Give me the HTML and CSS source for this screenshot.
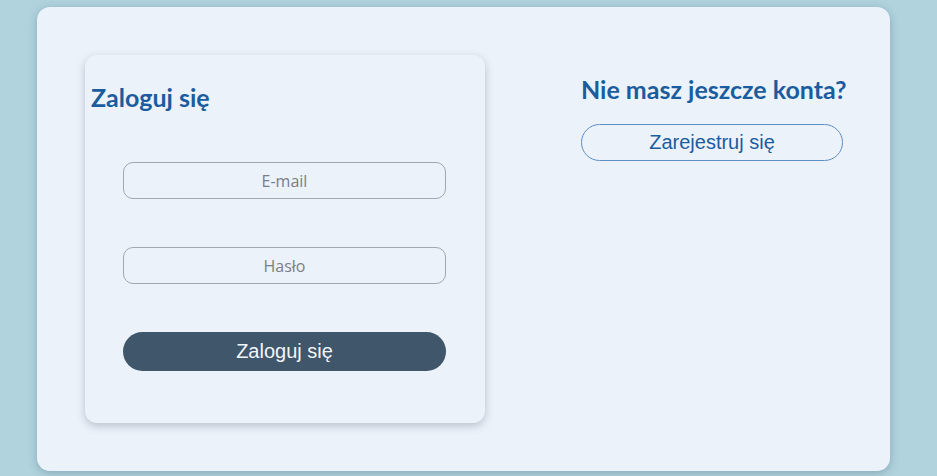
FILE: index.html
```html
<!DOCTYPE html>
<html lang="pl">
<head>
<meta charset="utf-8">
<title>Logowanie</title>
<link rel="stylesheet" href="styles.css">
</head>
<body>
<main class="panel">
  <section class="login-card">
    <h1 class="title">Zaloguj się</h1>
    <form class="form">
      <input class="field" type="email" placeholder="E-mail">
      <input class="field" type="password" placeholder="Hasło">
      <button class="btn-primary" type="button">Zaloguj się</button>
    </form>
  </section>
  <section class="register">
    <h2 class="title title-right">Nie masz jeszcze konta?</h2>
    <button class="btn-outline" type="button">Zarejestruj się</button>
  </section>
</main>
</body>
</html>
```
FILE: styles.css
```css
html, body {
  margin: 0;
  padding: 0;
  background: #b0d3de;
  height: 100%;
  overflow: hidden;
}
.panel {
  box-sizing: border-box;
  margin: 7px 0 0 37px;
  width: 853px;
  height: 464px;
  background: #ebf2fa;
  border-radius: 13px;
  box-shadow: 0 2px 8px rgba(60, 90, 110, 0.35);
  padding: 48px 40px 48px 48px;
  display: flex;
  gap: 96px;
}
.login-card {
  box-sizing: border-box;
  flex: 0 0 400px;
  width: 400px;
  height: 368px;
  border-radius: 12px;
  background: #ebf2fa;
  box-shadow: 0 3px 8px rgba(70, 80, 100, 0.3);
  padding: 26px 7px 0 6px;
}
.title {
  margin: 0;
  font-family: Lato, "Open Sans", sans-serif;
  font-weight: 700;
  font-size: 25px;
  line-height: 32px;
  color: #1b5c9e;
  white-space: nowrap;
}
.form {
  display: flex;
  flex-direction: column;
  align-items: center;
  gap: 48px;
  margin-top: 49px;
}
.field {
  box-sizing: border-box;
  width: 323px;
  height: 37px;
  border: 1px solid #a3a7ae;
  border-radius: 10px;
  background: #ebf2fa;
  font-family: "Open Sans", sans-serif;
  font-size: 16px;
  text-align: center;
  color: #555;
  outline: none;
}
.field::placeholder {
  color: #7b7e84;
}
.btn-primary {
  width: 323px;
  height: 39px;
  border: none;
  border-radius: 20px;
  background: #3f566b;
  color: #f2f5f8;
  font-family: "Liberation Sans", Arial, sans-serif;
  font-size: 20px;
}
.register {
  flex: 0 0 auto;
  padding-top: 18px;
  display: flex;
  flex-direction: column;
  align-items: flex-start;
}
.btn-outline {
  margin-top: 19px;
  box-sizing: border-box;
  width: 262px;
  height: 37px;
  border: 1px solid #5d8fc4;
  border-radius: 19px;
  background: #ebf2fa;
  color: #1b5c9e;
  font-family: "Liberation Sans", Arial, sans-serif;
  font-size: 20px;
}
```
